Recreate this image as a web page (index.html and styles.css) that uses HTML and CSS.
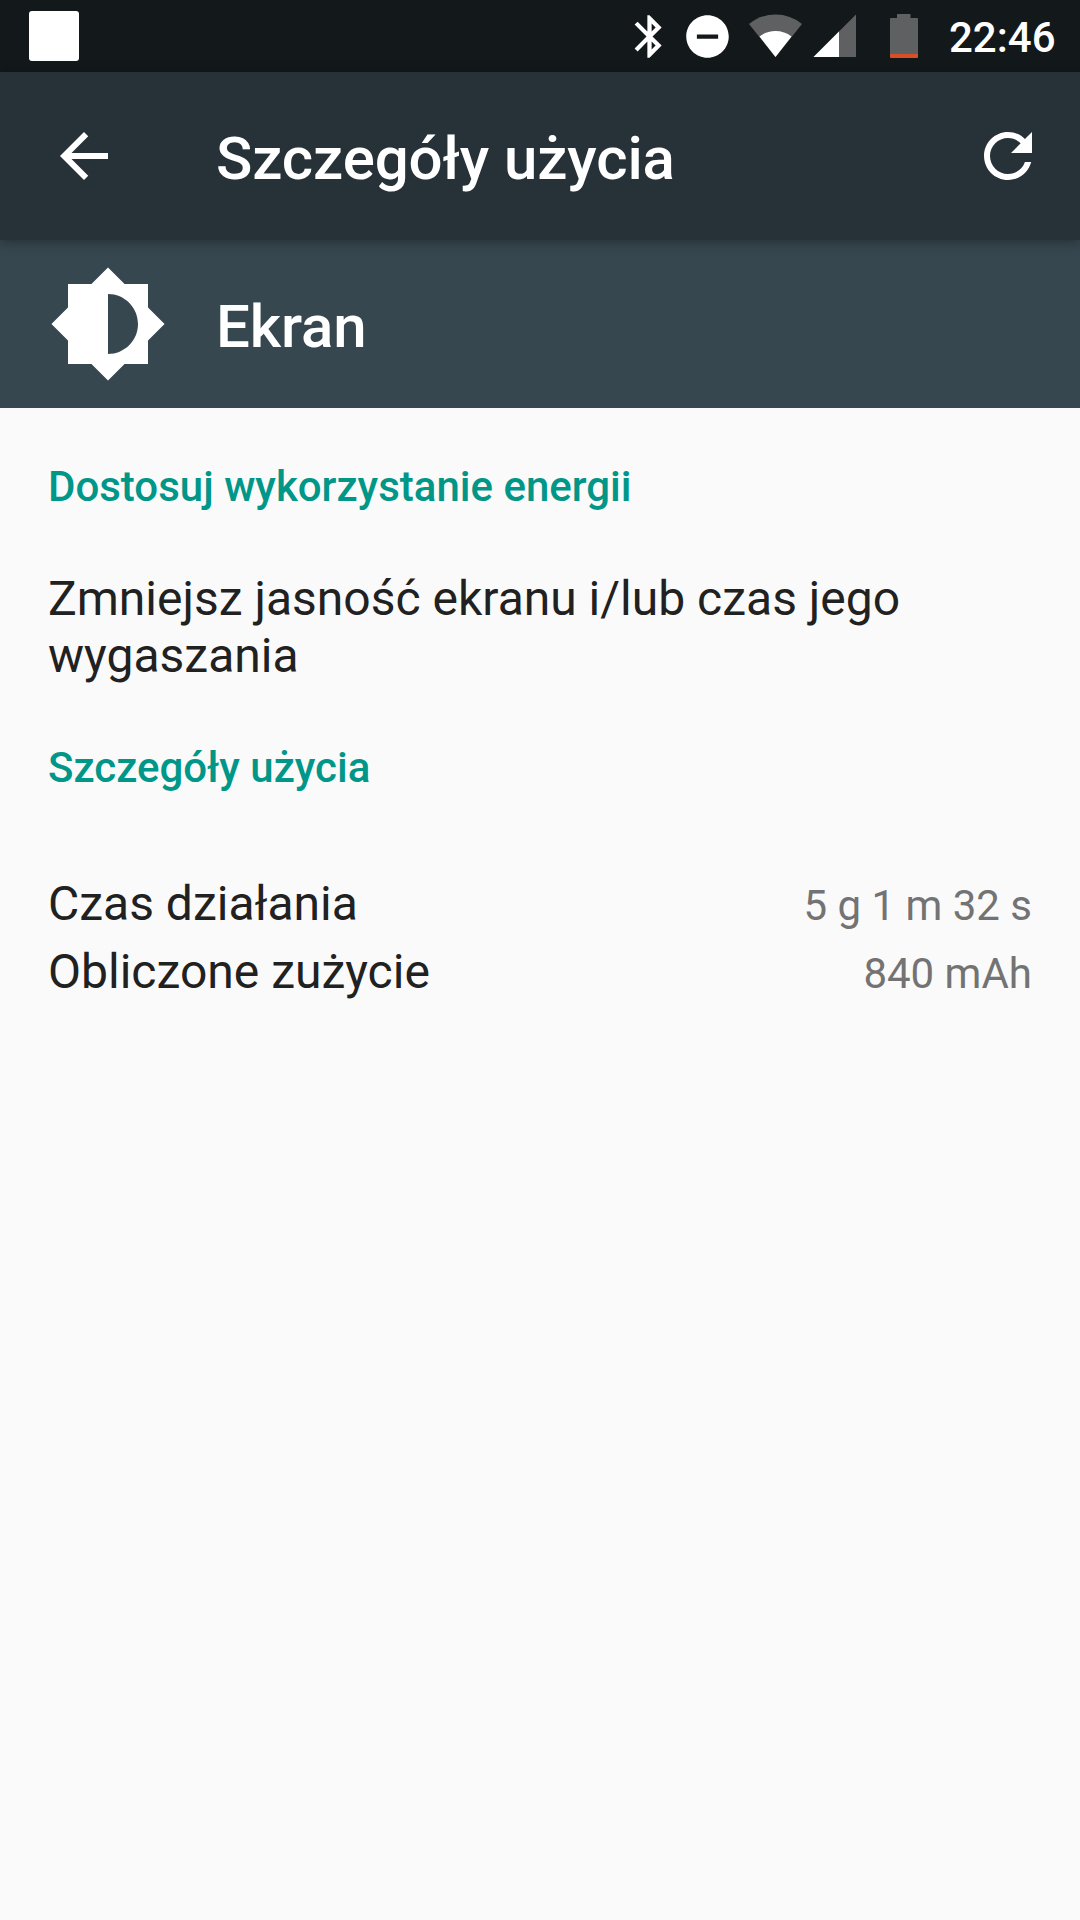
FILE: index.html
```html
<!DOCTYPE html>
<html lang="pl">
<head>
  <meta charset="UTF-8">
  <meta name="viewport" content="width=device-width, initial-scale=1.0">
  <title>Szczegóły użycia</title>
  <link rel="stylesheet" href="styles.css">
</head>
<body>
  <div class="status-bar">
    <div class="notification"></div>
    <div class="status-icons">
      <svg class="bluetooth" width="51" height="51" viewBox="0 0 24 24"><path fill="#fff" d="M17.71 7.71L12 2h-1v7.59L6.41 5 5 6.41 10.59 12 5 17.59 6.41 19 11 14.41V22h1l5.71-5.71-4.3-4.29 4.3-4.29zM13 5.83l1.88 1.88L13 9.59V5.83zm1.88 10.46L13 18.17v-3.76l1.88 1.88z"/></svg>
      <svg class="dnd" width="51" height="51" viewBox="0 0 24 24"><path fill="#fff" d="M12 2C6.48 2 2 6.48 2 12s4.48 10 10 10 10-4.48 10-10S17.52 2 12 2zm5 11H7v-2h10v2z"/></svg>
      <svg class="wifi" width="55" height="51" viewBox="0 0 55 51">
        <path fill="#5f6062" d="M27.5 46L1 13Q12.5 3.500 27.500 3.500T54 13z"/>
        <path fill="#fff" d="M27.5 46L11.500 25.500Q18.500 20 27.500 20T43.500 25.500z"/>
      </svg>
      <svg class="signal" width="51" height="51" viewBox="0 0 51 51">
        <path fill="#5f6062" d="M46 3.500V46H3.500z"/>
        <path fill="#fff" d="M29 20.500V46H3.500z"/>
      </svg>
      <svg class="battery" width="51" height="51" viewBox="0 0 51 51">
        <path fill="#5f6062" d="M19 3h13.500v4H39q1 0 1 1v35H12V8q0-1 1-1h6z"/>
        <path fill="#d84f27" d="M12 43h28v3q0 1-1 1H13q-1 0-1-1z"/>
      </svg>
      <span class="clock">22:46</span>
    </div>
  </div>

  <div class="toolbar">
    <svg class="back" width="72" height="72" viewBox="0 0 24 24"><path fill="#fff" d="M20 11H7.83l5.59-5.59L12 4l-8 8 8 8 1.41-1.41L7.83 13H20v-2z"/></svg>
    <h1>Szczegóły użycia</h1>
    <svg class="refresh" width="72" height="72" viewBox="0 0 24 24"><path fill="#fff" d="M17.65 6.35C16.2 4.9 14.21 4 12 4c-4.42 0-7.99 3.58-7.99 8s3.57 8 7.99 8c3.73 0 6.84-2.55 7.73-6h-2.08c-.82 2.33-3.04 4-5.65 4-3.31 0-6-2.69-6-6s2.69-6 6-6c1.66 0 3.14.69 4.22 1.78L13 11h7V4l-2.35 2.35z"/></svg>
  </div>

  <div class="app-header">
    <svg width="120" height="120" viewBox="0 0 24 24"><path fill="#fff" d="M20 15.31L23.31 12 20 8.69V4h-4.69L12 .69 8.69 4H4v4.69L.69 12 4 15.31V20h4.69L12 23.31 15.31 20H20v-4.69zM12 18V6c3.31 0 6 2.69 6 6s-2.69 6-6 6z"/></svg>
    <h2>Ekran</h2>
  </div>

  <div class="content">
    <h3>Dostosuj wykorzystanie energii</h3>
    <p class="tip">Zmniejsz jasność ekranu i/lub czas jego wygaszania</p>
    <h3>Szczegóły użycia</h3>
    <div class="details">
      <div class="row">
        <span>Czas działania</span>
        <span class="value">5 g 1 m 32 s</span>
      </div>
      <div class="row">
        <span>Obliczone zużycie</span>
        <span class="value">840 mAh</span>
      </div>
    </div>
  </div>
</body>
</html>
```
FILE: styles.css
```css
* {
  box-sizing: border-box;
}
body {
  margin: 0;
  min-height: 1920px;
  background: #fafafa;
  color: #212121;
  font-family: Roboto, sans-serif;
}
h1, h2, h3, p {
  margin: 0;
  font-weight: 500;
}
svg {
  display: block;
  flex: none;
}
.status-bar {
  display: flex;
  align-items: center;
  justify-content: space-between;
  height: 72px;
  padding: 0 26px 0 29px;
  background: #13181b;
}
.notification {
  width: 50px;
  height: 50px;
  border-radius: 3px;
  background: #fff;
}
.status-icons {
  display: flex;
  align-items: center;
}
.dnd {
  margin-left: 7px;
}
.wifi {
  margin-left: 15px;
}
.signal {
  margin-left: 7px;
}
.battery {
  margin-left: 17px;
}
.clock {
  width: 105px;
  height: 72px;
  margin-left: 20px;
  padding-top: 2px;
  color: #fff;
  font-size: 42px;
  font-weight: 500;
  line-height: 72px;
  white-space: nowrap;
}
.toolbar {
  position: relative;
  display: flex;
  align-items: center;
  height: 168px;
  padding: 0 36px 0 48px;
  background: #263238;
  box-shadow: 0 2px 12px rgba(0, 0, 0, 0.35);
}
.toolbar h1, .app-header h2 {
  color: #fff;
  font-size: 60px;
  line-height: 72px;
  letter-spacing: -0.1px;
}
.toolbar h1 {
  flex: 1;
  margin-left: 96px;
  padding-top: 6px;
}
.app-header {
  display: flex;
  align-items: center;
  height: 168px;
  padding-left: 48px;
  background: #37474f;
}
.app-header h2 {
  margin-left: 48px;
  padding-top: 6px;
}
.content {
  padding: 55px 48px 0;
}
.content h3 {
  color: #009688;
  font-size: 42px;
  line-height: 48px;
}
.tip {
  margin: 59px 0 60px;
  font-size: 48px;
  font-weight: 400;
  line-height: 57px;
}
.details {
  margin-top: 83px;
}
.row {
  display: flex;
  align-items: baseline;
  justify-content: space-between;
  height: 68px;
  font-size: 48px;
  line-height: 57px;
}
.value {
  color: #737373;
  font-size: 42px;
}
```
